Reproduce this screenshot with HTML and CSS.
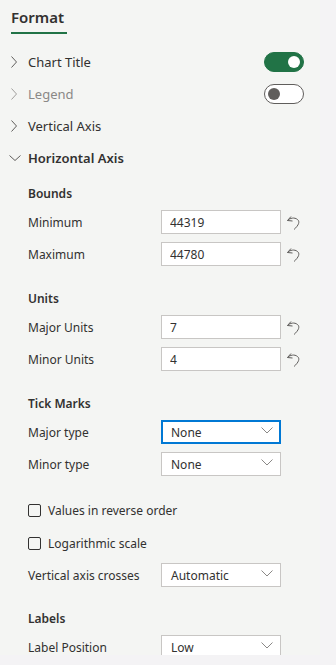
FILE: index.html
```html
<!DOCTYPE html>
<html lang="en">
<head>
<meta charset="UTF-8">
<meta name="viewport" content="width=device-width, initial-scale=1.0">
<title>Format</title>
<link rel="stylesheet" href="styles.css">
</head>
<body>

<div class="panel">
    <div class="tabs">
        <div class="tab active">Format</div>
    </div>

    <div class="acc-row">
        <svg class="chev" width="8" height="12" viewBox="0 0 8 12"><path d="M1.5 0.5 L6.5 6 L1.5 11.5" fill="none" stroke="#605e5c" stroke-width="1"/></svg>
        <span class="acc-title">Chart Title</span>
        <span class="toggle on"><span class="knob"></span></span>
    </div>
    <div class="acc-row disabled">
        <svg class="chev" width="8" height="12" viewBox="0 0 8 12"><path d="M1.5 0.5 L6.5 6 L1.5 11.5" fill="none" stroke="#a19f9d" stroke-width="1"/></svg>
        <span class="acc-title">Legend</span>
        <span class="toggle"><span class="knob"></span></span>
    </div>
    <div class="acc-row">
        <svg class="chev" width="8" height="12" viewBox="0 0 8 12"><path d="M1.5 0.5 L6.5 6 L1.5 11.5" fill="none" stroke="#605e5c" stroke-width="1"/></svg>
        <span class="acc-title">Vertical Axis</span>
    </div>
    <div class="acc-row open">
        <svg class="chev down" width="12" height="8" viewBox="0 0 12 8"><path d="M0.5 1.5 L6 6.5 L11.5 1.5" fill="none" stroke="#605e5c" stroke-width="1"/></svg>
        <span class="acc-title">Horizontal Axis</span>
    </div>

    <div class="acc-body">
        <div class="section">
            <div class="sec-title">Bounds</div>
            <div class="field">
                <span class="label">Minimum</span>
                <input class="text-input" type="text" value="44319">
                <svg class="reset" width="16" height="18" viewBox="0 0 16 18"><path d="M6 3.5 L2.5 7.5 L7.5 8 M2.5 7.5 C5 5 9.5 4 12.5 6.5 C15 8.5 14 12 9 16.5" fill="none" stroke="#605e5c" stroke-width="1"/></svg>
            </div>
            <div class="field">
                <span class="label">Maximum</span>
                <input class="text-input" type="text" value="44780">
                <svg class="reset" width="16" height="18" viewBox="0 0 16 18"><path d="M6 3.5 L2.5 7.5 L7.5 8 M2.5 7.5 C5 5 9.5 4 12.5 6.5 C15 8.5 14 12 9 16.5" fill="none" stroke="#605e5c" stroke-width="1"/></svg>
            </div>
        </div>

        <div class="section">
            <div class="sec-title">Units</div>
            <div class="field">
                <span class="label">Major Units</span>
                <input class="text-input" type="text" value="7">
                <svg class="reset" width="16" height="18" viewBox="0 0 16 18"><path d="M6 3.5 L2.5 7.5 L7.5 8 M2.5 7.5 C5 5 9.5 4 12.5 6.5 C15 8.5 14 12 9 16.5" fill="none" stroke="#605e5c" stroke-width="1"/></svg>
            </div>
            <div class="field">
                <span class="label">Minor Units</span>
                <input class="text-input" type="text" value="4">
                <svg class="reset" width="16" height="18" viewBox="0 0 16 18"><path d="M6 3.5 L2.5 7.5 L7.5 8 M2.5 7.5 C5 5 9.5 4 12.5 6.5 C15 8.5 14 12 9 16.5" fill="none" stroke="#605e5c" stroke-width="1"/></svg>
            </div>
        </div>

        <div class="section">
            <div class="sec-title">Tick Marks</div>
            <div class="field">
                <span class="label">Major type</span>
                <div class="select focused">
                    <span>None</span>
                    <svg width="12" height="7" viewBox="0 0 12 7"><path d="M0.5 0.5 L6 6 L11.5 0.5" fill="none" stroke="#8a8886" stroke-width="1"/></svg>
                </div>
            </div>
            <div class="field">
                <span class="label">Minor type</span>
                <div class="select">
                    <span>None</span>
                    <svg width="12" height="7" viewBox="0 0 12 7"><path d="M0.5 0.5 L6 6 L11.5 0.5" fill="none" stroke="#8a8886" stroke-width="1"/></svg>
                </div>
            </div>
        </div>

        <div class="checks">
            <label class="check"><span class="box"></span>Values in reverse order</label>
            <label class="check"><span class="box"></span>Logarithmic scale</label>
        </div>

        <div class="field">
            <span class="label">Vertical axis crosses</span>
            <div class="select">
                <span>Automatic</span>
                <svg width="12" height="7" viewBox="0 0 12 7"><path d="M0.5 0.5 L6 6 L11.5 0.5" fill="none" stroke="#8a8886" stroke-width="1"/></svg>
            </div>
        </div>

        <div class="section">
            <div class="sec-title">Labels</div>
            <div class="field">
                <span class="label">Label Position</span>
                <div class="select">
                    <span>Low</span>
                    <svg width="12" height="7" viewBox="0 0 12 7"><path d="M0.5 0.5 L6 6 L11.5 0.5" fill="none" stroke="#8a8886" stroke-width="1"/></svg>
                </div>
            </div>
        </div>
    </div>
</div>

</body>
</html>
```

FILE: styles.css
```css
body {
    margin: 0;
    background-color: #f4f3f5;
    font-family: "Noto Sans", "Open Sans", sans-serif;
    color: #323130;
}

.panel {
    width: 320px;
    height: 655px;
    overflow: hidden;
    background-color: #f4f5f3;
}

.tabs {
    display: flex;
    padding: 4px 0 0 11px;
    height: 46px;
    box-sizing: border-box;
}

.tab {
    font-size: 15px;
    font-weight: 600;
    line-height: 20px;
    padding: 3px 3px 5px 0;
    height: 30px;
    box-sizing: border-box;
    border-bottom: 2px solid #217346;
    align-self: flex-start;
}

.acc-row {
    display: flex;
    align-items: center;
    height: 32px;
    padding: 0 16px 0 9px;
}

.chev {
    flex: none;
    width: 8px;
    margin-left: 1px;
    margin-right: 10px;
}

.chev.down {
    width: 12px;
    margin-left: 0;
    margin-right: 7px;
}

.acc-title {
    font-size: 13px;
    flex: 1;
}

.acc-row.disabled .acc-title {
    color: #8a8886;
}

.acc-row.open .acc-title {
    font-weight: 600;
}

.toggle {
    width: 40px;
    height: 20px;
    box-sizing: border-box;
    border-radius: 10px;
    border: 1px solid #605e5c;
    background-color: #fff;
    display: flex;
    align-items: center;
    padding: 0 3px;
}

.toggle .knob {
    width: 12px;
    height: 12px;
    border-radius: 50%;
    background-color: #605e5c;
}

.toggle.on {
    background-color: #217346;
    border-color: #217346;
    justify-content: flex-end;
}

.toggle.on .knob {
    background-color: #fff;
}

.acc-body {
    padding: 0 0 0 28px;
}

.section {
    padding-top: 22px;
    display: flex;
    flex-direction: column;
    gap: 8px;
}

.section:first-child {
    padding-top: 10px;
}

.section + .section {
    padding-top: 23px;
}

.sec-title {
    font-size: 12px;
    font-weight: 600;
    line-height: 20px;
    margin-bottom: -2px;
}

.field {
    display: flex;
    align-items: center;
    height: 24px;
}

.label {
    font-size: 12px;
    width: 133px;
    flex: none;
}

.text-input {
    width: 120px;
    height: 24px;
    box-sizing: border-box;
    border: 1px solid #c8c6c4;
    background-color: #fff;
    padding: 0 8px;
    font-family: inherit;
    font-size: 12px;
    color: #323130;
    margin: 0;
}

.reset {
    margin-left: 4px;
}

.select {
    width: 120px;
    height: 24px;
    box-sizing: border-box;
    border: 1px solid #c8c6c4;
    background-color: #fff;
    display: flex;
    align-items: center;
    justify-content: space-between;
    padding: 0 7px 0 9px;
    font-size: 12px;
}

.select.focused {
    border: 2px solid #0078d4;
    padding: 0 6px 0 8px;
}

.select svg {
    margin-top: -3px;
}

.checks {
    display: flex;
    flex-direction: column;
    gap: 13px;
    padding: 24px 0 10px;
}

.check {
    display: flex;
    align-items: center;
    font-size: 12px;
    height: 20px;
}

.box {
    width: 13px;
    height: 13px;
    box-sizing: border-box;
    border: 1px solid #323130;
    border-radius: 2px;
    margin-right: 7px;
}
```
